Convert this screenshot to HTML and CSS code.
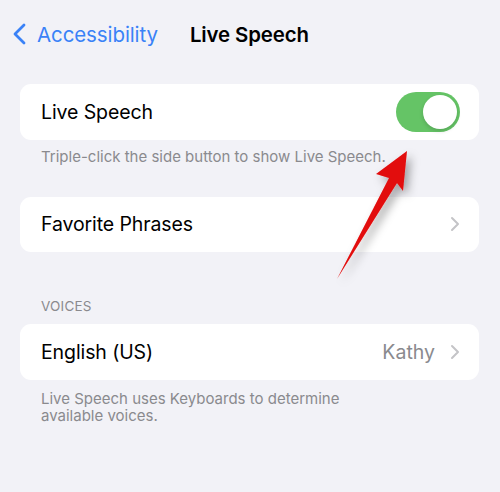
FILE: index.html
```html
<!DOCTYPE html>
<html>
<head>
<meta charset="utf-8">
<link rel="stylesheet" href="styles.css">
</head>
<body>
<div class="screen">
  <header class="nav">
    <div class="back">
      <svg class="back-chevron" width="16" height="22" viewBox="0 0 16 22"><path d="M12 2 L3 11 L12 20" fill="none" stroke="#3a82f7" stroke-width="2.8" stroke-linecap="round" stroke-linejoin="round"/></svg>
      <span class="back-label">Accessibility</span>
    </div>
    <div class="title">Live Speech</div>
  </header>

  <section class="group first">
    <div class="card">
      <div class="row">
        <span class="label">Live Speech</span>
        <span class="toggle"><span class="knob"></span></span>
      </div>
    </div>
    <p class="footer">Triple-click the side button to show Live Speech.</p>
  </section>

  <section class="group">
    <div class="card">
      <div class="row">
        <span class="label">Favorite Phrases</span>
        <svg class="chev" width="10" height="16" viewBox="0 0 10 16"><path d="M2 2 L8 8 L2 14" fill="none" stroke="#c4c4c7" stroke-width="2" stroke-linecap="round" stroke-linejoin="round"/></svg>
      </div>
    </div>
  </section>

  <section class="group voices">
    <p class="header">VOICES</p>
    <div class="card">
      <div class="row">
        <span class="label">English (US)</span>
        <span class="value">Kathy</span>
        <svg class="chev" width="10" height="16" viewBox="0 0 10 16"><path d="M2 2 L8 8 L2 14" fill="none" stroke="#c4c4c7" stroke-width="2" stroke-linecap="round" stroke-linejoin="round"/></svg>
      </div>
    </div>
    <p class="footer notes">Live Speech uses Keyboards to determine<br>available voices.</p>
  </section>

  <svg class="arrow" width="500" height="492" viewBox="0 0 500 492">
    <defs>
      <filter id="sh" x="-50%" y="-50%" width="200%" height="200%">
        <feDropShadow dx="4" dy="5" stdDeviation="5" flood-color="#000" flood-opacity="0.35"/>
      </filter>
    </defs>
    <path d="M407,137 L376,160 L389,164 L337,265 L397,169 L403,177 Z" fill="#e20a0a" filter="url(#sh)"/>
  </svg>
</div>
</body>
</html>
```

FILE: styles.css
```css
* { box-sizing: border-box; }
html, body {
  margin: 0;
  padding: 0;
  background: #f2f2f7;
}
body {
  font-family: Inter, "Liberation Sans", sans-serif;
  color: #000;
  width: 500px;
  height: 492px;
  overflow: hidden;
}
.screen {
  position: relative;
  width: 500px;
  height: 492px;
  padding: 0 21px 0 20px;
}
.nav {
  display: flex;
  align-items: center;
  height: 40px;
  margin-top: 14px;
  margin-left: -8px;
}
.back {
  display: flex;
  align-items: center;
  gap: 9px;
  color: #3a82f7;
  font-size: 20.5px;
  letter-spacing: -0.1px;
}
.back-chevron { display: block; }
.title {
  margin-left: 32px;
  font-size: 20.4px;
  font-weight: 600;
  letter-spacing: -0.1px;
}
.group.first { margin-top: 30px; }
.card {
  background: #fff;
  border-radius: 11px;
}
.row {
  display: flex;
  align-items: center;
  height: 55.5px;
  padding: 0 19px 0 21px;
}
.label {
  flex: 1;
  font-size: 19.5px;
  letter-spacing: -0.1px;
}
.value {
  font-size: 19.5px;
  color: #8a8a8e;
  margin-right: 15px;
}
.chev { display: block; }
.toggle {
  position: relative;
  width: 64px;
  height: 40px;
  border-radius: 20px;
  background: #65c466;
}
.knob {
  position: absolute;
  top: 3px;
  right: 3px;
  width: 34px;
  height: 34px;
  border-radius: 50%;
  background: #fff;
  box-shadow: 0 2px 4px rgba(0,0,0,0.15);
}
.footer {
  margin: 8px 0 0 0;
  padding: 0 21px;
  font-size: 15px;
  line-height: 18px;
  color: #8a8a8e;
  height: 49px;
}
.footer.notes { margin-top: 10px; line-height: 17.5px; }
.voices { margin-top: 46px; }
.header {
  margin: 0 0 9px 0;
  padding: 0 21px;
  font-size: 13.5px;
  line-height: 17px;
  color: #8a8a8e;
  letter-spacing: 0.2px;
}
.arrow {
  position: absolute;
  left: 0;
  top: 0;
  pointer-events: none;
}
```
